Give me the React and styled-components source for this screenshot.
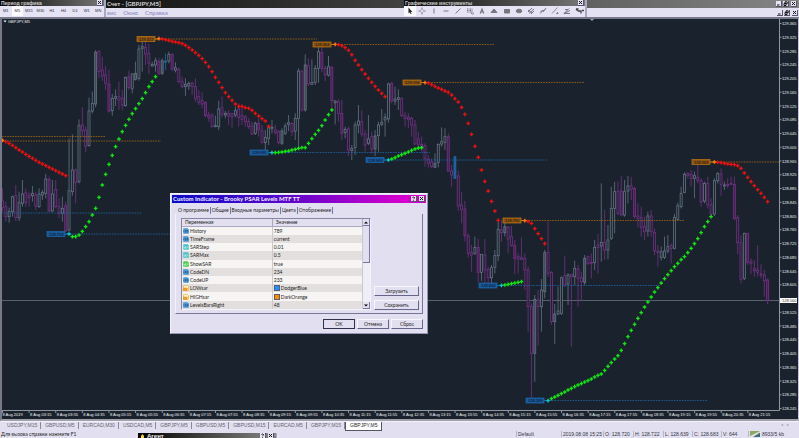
import React from "react";
import styled, { createGlobalStyle, css } from "styled-components";

const GlobalStyle = createGlobalStyle`
  * {
    box-sizing: border-box;
  }

  body {
    margin: 0;
    background: #e2e0f0;
    font-family: "Liberation Sans", Arial, sans-serif;
    font-size: 5px;
    line-height: 6px;
    color: #222;
  }

  button {
    margin: 0;
    padding: 0;
    font: inherit;
    color: inherit;
  }
`;

const Page = styled.div`
  position: relative;
  display: flex;
  flex-direction: column;
  min-height: 100vh;
  overflow: hidden;
  white-space: nowrap;
`;

const TitleBar = styled.header`
  display: flex;
  align-items: center;
  justify-content: space-between;
  height: 8px;
  padding: 0 2px 0 107px;
  background: linear-gradient(90deg, #050505, #2c2c2c 35%, #858585);
  color: #d8d8d8;
  font-family: Lato, sans-serif;
  font-size: 6px;
  font-weight: bold;
`;

const MenuBar = styled.nav`
  display: flex;
  align-items: center;
  gap: 7px;
  height: 9px;
  padding: 0 1px 0 107px;
  background: #e4e2f2;
`;

const MenuLink = styled.a`
  color: #8482bc;
  font-family: Lato, sans-serif;
  font-size: 6px;
  text-decoration: none;
`;

const WindowButtons = styled.div`
  display: flex;
  gap: 1px;
  margin-left: auto;
`;

const SmallButton = styled.button`
  display: flex;
  align-items: center;
  justify-content: center;
  width: 6px;
  height: 6px;
  border: 0;
  border-right: 1px solid #55536e;
  border-bottom: 1px solid #55536e;
  background: #e6e4f2;

  &:last-child {
    margin-left: ${(p) => (p.$apart ? "1px" : "0")};
  }

  svg {
    display: block;
    width: 5px;
    height: 5px;
    fill: none;
    stroke: #111;
  }
`;

const Floating = styled.section`
  position: absolute;
  top: 0;
  left: ${(p) => p.$left}px;
  width: ${(p) => p.$width}px;
  border-right: 2px solid #aaa8c0;
  background: #e6e4f4;
`;

const FloatingTitle = styled.div`
  display: flex;
  align-items: center;
  justify-content: space-between;
  height: 6px;
  padding: 0 1px;
  background: linear-gradient(90deg, #080808, #777);
  color: #cfcfcf;
  font-weight: bold;
`;

const Tools = styled.div`
  display: grid;
  grid-template-columns: repeat(${(p) => p.$count}, 1fr);
  height: 11px;
  padding-bottom: 1px;
`;

const Tool = styled.button`
  display: flex;
  align-items: center;
  justify-content: center;
  border: 0;
  background: ${(p) => (p.$active ? "#fbfaff" : "transparent")};
  color: #2c2c3a;
  font-size: 4px;

  svg {
    width: 10px;
    height: 8px;
    fill: none;
    stroke: #777784;
  }
`;

const ChartFrame = styled.main`
  border: 2px solid #77798a;
  border-right: 1px solid #c8c6da;
  border-bottom-color: #9fa0a8;
  background: #1a232d;

  svg {
    display: block;
    width: 100%;
    height: auto;
  }

  text {
    font-size: 4px;
    fill: #f0f2f4;
  }
`;

const ChartTabs = styled.nav`
  display: flex;
  height: 10px;
  padding: 0 10px 0 3px;
  border-top: 1px solid #f3f2fa;
`;

const ChartTab = styled.a`
  position: relative;
  height: 7px;
  padding: 0 3px 0 4px;
  color: #64646e;
  font-size: 5px;
  line-height: 7px;
  text-decoration: none;
  border-right: 1px solid #8a8996;

  ${(p) =>
    p.$active &&
    css`
      height: 9px;
      border: 1px solid #55555f;
      border-top: 0;
      background: #fff;
      color: #222;
    `}
`;

const TabArrows = styled.div`
  display: flex;
  gap: 4px;
  margin-left: auto;
  color: #9694ac;
  font-size: 4px;
`;

const StatusBar = styled.footer`
  display: flex;
  height: 7px;
  padding-left: 1px;
  padding-right: 1px;
`;

const StatusHelp = styled.div`
  flex: 1;
  font-family: Lato, sans-serif;
`;

const StatusCell = styled.div`
  display: flex;
  align-items: center;
  gap: 2px;
  width: ${(p) => p.$width}px;
  height: 6px;
  padding-left: 1px;
  border-left: 1px solid #b4b2cc;
  color: #333340;
`;

const Agent = styled.section`
  position: absolute;
  left: 138px;
  bottom: 0;
  display: flex;
  align-items: center;
  gap: 2px;
  width: 139px;
  height: 5px;
  padding: 1px 2px 0;
  overflow: hidden;
  border-right: 1px solid #aaa8c0;
  background: linear-gradient(90deg, #000, #888);
  color: #eee;
  font-size: 6px;
  font-weight: bold;
`;

const Dialog = styled.section`
  position: absolute;
  left: 170px;
  top: 193px;
  width: 258px;
  height: 141px;
  padding: 1px;
  border: 1px solid #f4f3fb;
  border-right-color: #9896b4;
  border-bottom-color: #9896b4;
  background: #e2e0f0;
  font-family: Lato, sans-serif;
`;

const DialogTitle = styled.div`
  display: flex;
  align-items: center;
  height: 8px;
  padding: 0 1px;
  background: linear-gradient(90deg, #0a0ac8, #5a06cc 45%, #d400cc 90%);
  color: #f2f0ff;
  font-size: 6px;
  font-weight: bold;
`;

const DialogTabs = styled.div`
  display: flex;
  margin: 4px 0 0 5px;
`;

const DialogTab = styled.button`
  height: 7px;
  padding: 0 1px;
  border: 0;
  border-right: 1px solid #77759a;
  background: transparent;
  line-height: ${(p) => (p.$active ? 5 : 7)}px;
`;

const DialogPanel = styled.div`
  display: flex;
  justify-content: space-between;
  gap: 3px;
  height: 100px;
  margin: 0 3px;
  padding: 4px 3px 3px 5px;
  border-left: 1px solid #f4f3fb;
  border-right: 1px solid #77759a;
  border-bottom: 1px solid #77759a;
`;

const TableBox = styled.div`
  display: flex;
  flex: 1;
  border: 1px solid #8785a4;
  border-right-color: #f4f3fb;
  border-bottom-color: #f4f3fb;
`;

const ParamTable = styled.table`
  flex: 1;
  width: 100%;
  height: 90px;
  border-collapse: collapse;
  table-layout: fixed;
  text-align: left;

  th {
    width: 50%;
    height: 7px;
    padding: 0 3px;
    border-right: 1px solid #a9a7c2;
    border-bottom: 1px solid #a9a7c2;
    background: #e2e0f0;
    font-weight: normal;
    line-height: 6px;
  }

  td {
    padding: 0 1px;
    border-right: 1px solid #c9c7cf;
    line-height: 6px;
  }

  tbody tr:nth-child(odd) {
    background: #f7f5f4;
  }

  tbody tr:nth-child(even) {
    background: #e2dfde;
  }
`;

const CellContent = styled.div`
  display: flex;
  align-items: center;
  gap: 1px;
`;

const Swatch = styled.span`
  width: 6px;
  height: 6px;
  border: 1px solid #55606c;
  background: ${(p) => p.$color};
`;

const ScrollBar = styled.div`
  display: flex;
  flex-direction: column;
  flex-shrink: 0;
  width: 7px;
  background: #efeef7;
`;

const ScrollButton = styled.button`
  display: flex;
  align-items: center;
  justify-content: center;
  height: 7px;
  border: 0;
  border-right: 1px solid #77759a;
  border-bottom: 1px solid #77759a;
  background: #e2e0f0;

  svg {
    width: 4px;
    height: 3px;
  }
`;

const ScrollThumb = styled.div`
  height: 37px;
  margin-bottom: auto;
  border-right: 1px solid #77759a;
  border-bottom: 1px solid #77759a;
  background: #e2e0f0;
`;

const SideButtons = styled.div`
  display: flex;
  flex-direction: column;
  justify-content: flex-end;
  gap: 4px;
  width: 45px;
`;

const DialogButtons = styled.div`
  display: flex;
  justify-content: flex-end;
  gap: 2px;
  margin: 5px 3px 0;
`;

const PushButton = styled.button`
  min-width: 32px;
  height: 10px;
  border: 1px solid #f8f7fd;
  border-right-color: #66648a;
  border-bottom-color: #66648a;
  background: #e2e0f0;

  ${(p) =>
    p.$primary &&
    css`
      border-color: #33324e;
    `}
`;

/* Chart data: values are vertical positions in thirds of a chart unit,
   counted from the base of the group: high low top bottom kind. */
const CANDLES = [
  {
    base: 90,
    rows: `475 545 513 533 d,515 575 530 560 d,533 578 545 560 u,497 560 500 545 u,465 573 497 563 d,
485 573 518 563 u,450 530 492 520 u,475 530 488 518 d,485 530 495 503 d,468 515 490 497 u,
485 540 495 528 d,475 533 492 530 u,480 510 487 495 u,432 505 447 490 u,440 545 448 543 D,
450 545 492 543 u,450 535 478 530 d,505 565 530 550 d,500 575 535 550 u,515 605 527 603 D,
325 605 482 600 u,313 497 420 485 u,415 520 420 458 d,268 460 287 455 u,232 320 285 302 d,
290 367 300 348 d,203 350 243 347 u,185 250 220 243 u,60 232 67 222 U,60 145 65 125 d,
80 153 120 138 d,108 180 135 160 d,120 248 162 243 D,192 257 205 242 u,178 228 200 205 u,
155 240 200 210 d,180 240 205 225 d,140 230 142 227 u,122 180 140 173 D,130 190 132 175 u,
95 152 130 148 U,45 152 57 145 u,35 125 50 55 u,32 105 52 72 d,42 132 70 100 d,
95 110 103 108 u,83 125 92 105 u,85 135 95 130 D,85 135 92 130 U,70 120 93 97 b,
65 100 73 93 u,70 123 73 117 D,97 127 113 120 u,113 160 118 155 d,140 175 155 170 d,
145 198 163 170 u,155 180 160 168 u,155 195 160 170 d,145 215 170 205 d,180 225 200 217 d,
187 235 212 222 d,215 262 217 257 D,245 275 255 262 d,250 293 255 290 d,257 292 287 290 u,
212 300 237 290 u,200 262 233 253 d,243 265 250 255 u,240 285 250 258 d,250 293 250 260 d,
230 262 242 255 u,220 290 237 262 d,232 285 257 268 d,255 290 260 275 d,265 297 275 290 d,
275 315 288 312 d,275 315 280 310 u,265 320 280 300 D,285 340 303 337 d,300 365 322 338 u,
285 345 293 325 u,270 310 292 295 u,285 315 300 308 d,300 343 305 338 d,295 345 303 340 U,
280 315 288 310 u,255 303 278 283 u,278 318 280 305 d,250 330 265 303 u,115 355 123 265 u,
120 245 125 240 d,73 245 105 240 U,85 168 107 162 d,88 165 157 163 u,105 165 115 157 u,
45 158 65 115 u,47 127 67 115 D,107 153 115 135 d,78 140 110 135 u,108 245 112 212 D,
210 283 213 218 u,208 275 215 250 d,210 330 250 310 D,290 325 298 308 u,290 378 297 360 d,
345 390 355 362 u,275 375 285 352 u,225 310 273 285 u,240 320 275 312 d,300 365 312 345 d,
255 345 327 340 u,305 370 320 357 d,300 378 318 357 U,275 365 285 317 u,237 288 277 283 u,
250 320 262 270 u,158 278 162 267 u,155 220 160 213 D,170 225 207 213 u,178 240 203 208 u,
203 260 205 257 d,245 290 257 265 d,250 295 262 268 d,260 320 265 285 d,270 345 285 342 d,
305 360 327 343 d,320 365 343 350 d,340 410 347 385 d,375 412 388 400 d,385 415 395 410 d,
370 412 400 412 U,340 412 343 397 u,292 350 335 342 u,295 360 320 337 u,310 425 320 423 D,
405 470 423 435 d,380 445 380 445 b`,
  },
  {
    base: 390,
    rows: `122 243 138 228 d,185 280 225 238 d,213 335 237 317 D,310 383 318 370 d,345 425 368 375 d,320 375 352 370 u`,
  },
  {
    base: 630,
    rows: `87 217 112 187 D,132 213 133 187 u,87 225 135 180 d,170 222 178 203 d,165 225 173 203 u,
120 190 137 172 u,35 153 58 137 u,30 95 60 68 d,35 80 50 68 U,48 130 52 87 d,
48 110 80 107 d,90 192 107 145 D,130 190 140 147 d,82 150 143 148 d,130 240 145 180 d,
170 365 180 290 d,280 565 290 430 d,255 515 268 430 U,240 407 270 290 d,207 365 240 290 u,
120 265 128 245 U,35 200 128 190 d,183 345 187 335 d,282 402 312 335 U,230 315 303 312 u,
200 315 203 310 u,137 230 197 225 d,190 285 195 222 u,193 410 193 200 d,152 225 175 200 u,
165 290 177 205 d,185 272 203 215 d,135 225 145 217 U,137 165 140 160 d,130 205 157 160 d,
90 180 112 158 u,72 190 105 113 d,-80 155 97 108 u,0 150 98 120 d,45 148 90 120 u,
-70 90 -5 85 u,-85 70 -55 -5 u,-85 15 -55 10 d`,
  },
  {
    base: 420,
    rows: `108 228 153 225 D,120 230 155 225 u,108 190 138 153 u,112 180 138 148 d,140 235 145 230 D,
190 262 228 235 d,200 290 233 262 d,230 300 260 275 d,215 290 228 273 u,210 290 228 275 d,
265 345 277 333 d,315 380 333 337 d,320 362 335 352 u,290 357 333 352 u,285 340 320 333 u,
310 370 317 325 d,222 328 232 325 u,188 242 197 238 u,140 205 160 200 u,97 160 103 157 u,
97 115 100 107 d,90 140 103 115 d,95 175 107 115 u,75 130 112 122 d,115 200 122 185 d,
125 190 130 183 u,110 205 130 195 d,175 225 195 222 d,115 228 122 222 u,97 130 100 122 u,
85 167 102 133 d,125 150 135 138 u,115 145 133 137 d,110 133 130 133 d,110 240 133 235 D,
225 342 233 308 d,285 430 308 418 d,278 420 280 415 u,280 375 280 367 D,355 402 365 370 d,
360 410 385 392 d,315 410 390 397 d,373 415 402 405 d,390 470 405 422 d,415 492 420 482 D`,
  },
];

const candles = CANDLES.flatMap(({ base, rows }) =>
  rows.split(",").map((row) => {
    const [high, low, top, bottom, kind] = row.trim().split(" ");
    const y = (v) => (Number(v) + base) / 3;
    return { high: y(high), low: y(low), top: y(top), bottom: y(bottom), kind };
  })
);

const RED = "#ee1010";
const GREEN = "#10e810";

// color, first bar, base, positions
const SAR = [
  [RED, 0, 90, "331 335 340 346 353 360 366 373 379 385 391 397 402 407 412 417 422 427 432 437"],
  [GREEN, 20, 90, "612 620 620 615 604 590 575 555 535 502 465 433 403 376 350 327 305 286 268 251 236 221 206 188 170 155 140"],
  [RED, 47, 90, "26 27 29 31 34 36 38 41 46 53 60 68 76 86 97 110 125 142 157 173 188 200 211 222 229 229 233 235 241 250 258 266 273 289"],
  [GREEN, 81, 90, "368 368 367 366 364 363 360 358 355 353 353 340 326 313 301 287 270 254 240"],
  [RED, 100, 90, "43 44 47 53 61 74 91 105 119 132 145 157 169 180 190 200"],
  [GREEN, 116, 90, "390 387 383 378 374 370 366 361 357 354 353"],
  [RED, 127, 90, "158 159 164 169 174 178 183 187 195 206 216 232 253 280 313 349 382 420 454 483 514 543 571"],
  [GREEN, 150, 630, "226 225 223 221 219 217 215"],
  [RED, 157, 630, "32 34 40 56 71 86 101"],
  [GREEN, 164, 630, "572 566 561 556 551 546 540 535 530 525 521 516 512 507 501 496 492 481 469 458 447 437 421 401 380 361 343 325 308 291 276 261 246 233 219 206 194 182 170 160 149 140 128 115 101 86 68 50 35 20"],
  [RED, 214, 420, "66 67 68 70 72 73 74 77 85 99 112 125 137 149 160 172 185"],
];

const HIGH = { line: "#a8660f", fill: "#8a5412", edge: "#c4780f", ink: "#100c08", dot: "#ff7a10" };
const LOW = { line: "#1f64a8", fill: "#1a5796", edge: "#1f6ab4", ink: "#040c18", dot: "#10c8c8" };

const LEVELS = [
  { tone: HIGH, from: 2, to: 105, y: 136.5 },
  { tone: HIGH, from: 2, to: 161, y: 141 },
  { tone: LOW, from: 2, to: 141, y: 213 },
  { tone: LOW, tag: "128.753", x: 47, to: 228, y: 234 },
  { tone: HIGH, tag: "129.322", x: 137, to: 317, y: 39 },
  { tone: LOW, tag: "128.995", x: 250, to: 430, y: 152.5 },
  { tone: HIGH, tag: "129.304", x: 313, to: 494, y: 44.5 },
  { tone: LOW, tag: "128.969", x: 366, to: 547, y: 160 },
  { tone: HIGH, tag: "129.194", x: 403, to: 584, y: 82.5 },
  { tone: LOW, tag: "128.604", x: 479, to: 660, y: 285.5 },
  { tone: HIGH, tag: "128.792", x: 503, to: 684, y: 220.5 },
  { tone: LOW, tag: "128.269", x: 526, to: 707, y: 400.5 },
  { tone: HIGH, tag: "128.963", x: 692, to: 779, y: 162 },
];

const TIMES = [
  "2019", "03:15", "03:55", "04:35", "05:15", "05:55", "06:35", "07:15", "07:55", "08:35",
  "09:15", "09:55", "10:35", "11:15", "11:55", "12:35", "13:15", "13:55", "14:35", "15:15",
  "15:55", "16:35", "17:15", "17:55", "18:35", "19:15", "19:55", "20:35", "21:15",
];

// the bid label covers this step of the price scale
const COVERED_STEP = 20;

const COLORS = {
  u: ["#647484", "#1a232d"],
  U: ["#647484", "#3b4854"],
  d: ["#773088", "#1a232d"],
  D: ["#773088", "#42214e"],
  b: ["#1e62a0", "#1e62a0"],
};

const barX = (i) => (7.5 + 9.98 * i) / 3;

const Candle = ({ x, high, low, top, bottom, kind }) => {
  const [stroke, fill] = COLORS[kind];
  return (
    <g stroke={stroke} strokeWidth="0.8">
      <path d={`M${x} ${high}V${low}`} />
      <rect x={x - 1} y={top} width="2" height={Math.max(bottom - top, 0.5)} fill={fill} />
    </g>
  );
};

const Level = ({ tone, tag, x, from, to, y }) => (
  <g>
    <path
      d={`M${tag ? x + 18 : from} ${y}H${to}`}
      stroke={tone.line}
      strokeWidth="0.8"
      strokeDasharray="1.6 1"
    />
    {tag && (
      <>
        <rect x={x} y={y - 2.5} width="18" height="5" fill={tone.fill} stroke={tone.edge} strokeWidth="0.7" />
        <text x={x + 2} y={y + 1.5} style={{ fill: tone.ink }}>
          {tag}
        </text>
        <path d={`M${x + 18} ${y}h4`} stroke={tone.edge} />
      </>
    )}
  </g>
);

const Chart = () => (
  <svg viewBox="2 19 796 400" role="img" aria-label="GBPJPY,M5">
    <path d="M2 300.5H779" stroke="#66717c" strokeWidth="0.8" />
    {candles.map((c, i) => (
      <Candle key={i} x={barX(i)} {...c} />
    ))}
    {LEVELS.map((level) => (
      <Level key={level.y} {...level} />
    ))}
    {SAR.map(([color, start, base, list]) =>
      list.split(" ").map((v, i) => {
        const x = barX(start + i);
        const y = (Number(v) + base) / 3;
        const edge = color === RED ? HIGH.dot : LOW.dot;
        return (
          <path
            key={`${start}-${i}`}
            d={`M${x - 1.8} ${y}h3.6M${x} ${y - 1.8}v3.6`}
            stroke={i === 0 ? edge : color}
            strokeWidth="1.4"
          />
        );
      })
    )}
    <path d="M2 410.5H779.5V19" fill="none" stroke="#8f98a1" />
    <path d="M590 19h4l-2 2z" fill="#9aa2ac" />
    <path d="M3.5 20.5h3l-1.5 2z" fill="#fff" />
    <text x="8" y="23">GBPJPY,M5</text>
    {Array.from({ length: 29 }, (_, i) => {
      const y = 23.5 + i * 13.75;
      return (
        <g key={i}>
          <path d={`M780 ${y}h1.5`} stroke="#8f98a1" />
          {i !== COVERED_STEP && (
            <text x="782" y={y + 1.5}>
              {(129.365 - i * 0.04).toFixed(3)}
            </text>
          )}
        </g>
      );
    })}
    <rect x="780" y="298" width="17" height="5" fill="#fff" />
    <text x="782" y="302" style={{ fill: "#333" }}>128.560</text>
    {TIMES.map((time, i) => {
      const x = 2.5 + i * 26.62;
      return (
        <g key={time}>
          <path d={`M${x} 410v3`} stroke="#8f98a1" />
          <text x={i ? x + 1 : x} y="416">
            8 Aug {time}
          </text>
        </g>
      );
    })}
  </svg>
);

const WINDOW_ICONS = {
  Minimize: "M1 4h2.5",
  Restore: "M1 2.5h2v2h-2zM2 2V.8h2.2v2H3",
  Close: "M1 1l3 3M4 1L1 4",
  Help: "M1.5 1.5q1-1 2 0q0 1-1 1.500M2.500 4v.6",
};

const WindowButton = ({ name, apart }) => (
  <SmallButton aria-label={name} $apart={apart}>
    <svg viewBox="0 0 5 5">
      <path d={WINDOW_ICONS[name]} />
    </svg>
  </SmallButton>
);

const DRAW_TOOLS = [
  ["Cursor", <path d="M3.500 .5v6l1.300-1.300 1 2 .8-.4-.9-1.900h1.600z" fill="#222" stroke="none" />],
  ["Crosshair", <path d="M5 .5v2.500M5 5v2.500M1.500 4H4M6 4h2.500" />],
  ["Vertical line", <path d="M5 1.500v5" />],
  ["Horizontal line", <path d="M2.500 4h5" />],
  ["Trend line", <path d="M2.500 6.500l5-5" />],
  ["Fibonacci", <path d="M2 2h6M2 3.500h6M2 5h6M6 6h3l-1.500 1.500z" strokeDasharray="1 .5" />],
  ["Text", <path d="M3.200 6.500L5 2l1.800 4.500M4 5h2" strokeWidth="1.200" />],
  ["Triangle", <path d="M2 5.500L5 2l3 3.500z" fill="#777" />],
  ["Rectangle", <path d="M2.500 2.500h5v3.500h-5z" fill="#777" />],
  ["Ellipse", <ellipse cx="5" cy="4" rx="2.800" ry="1.800" fill="#777" />],
  ["Channel", <path d="M2 5l4-4M3 6.500l5-4.500M5 7l3-3M2 3l4 3" />],
  ["Pitchfork", <path d="M2.500 6.500l2-3 1 1 2.500-3.500M2.500 4.500L7 3" />],
  ["Gann line", <path d="M2 6.500l5.500-6M6 6.500h2.500M7.500 5v2" strokeWidth=".8" />],
  ["Gann fan", <path d="M2 6.500l5-5M2 6.500l6-3M2 6.500h6M3 2.500h3" />],
  ["Arrows", <path d="M2 2l2 2M4 4h3v2.500M2 2h2.500M8 3.500h2" strokeWidth="1.300" stroke="#444" />],
];

const PARAMS = [
  ["int", "History", "789"],
  ["int", "TimeFrame", "current"],
  ["num", "SARStep", "0.01"],
  ["num", "SARMax", "0.5"],
  ["bool", "ShowSAR", "true"],
  ["int", "CodeDN", "234"],
  ["int", "CodeUP", "233"],
  ["color", "LOWsar", "DodgerBlue", "#1e90ff"],
  ["color", "HIGHsar", "DarkOrange", "#ff8c00"],
  ["int", "LevelsBarsRight", "48"],
];

const TYPE_COLORS = { int: "#4b98d8", num: "#4cc4cc", bool: "#4fce55", color: "#f2aa28" };

const TypeIcon = ({ type }) => (
  <svg width="6" height="6" viewBox="0 0 6 6">
    <path d="M.5.5h4l1 1v4h-5z" fill={type === "color" ? "#fff3c8" : TYPE_COLORS[type]} stroke={TYPE_COLORS[type]} strokeWidth=".6" />
    {type === "color" ? (
      <path d="M0 3h4v2.500H0zM4 4l1.500-1.500" fill="#f2a020" stroke="#e08818" strokeWidth=".5" />
    ) : type === "int" ? (
      <path d="M.8 2.500v1.500M2 2.500h1v1.500H2M4 2.500h1v1.500H4" fill="none" stroke="#174a80" strokeWidth=".6" />
    ) : (
      <path d="M1 3l1 1.500 1-2.500M3.500 4.500L5 2.500" fill="none" stroke="#e8ffff" strokeWidth=".6" />
    )}
  </svg>
);

const IndicatorDialog = () => (
  <Dialog role="dialog" aria-label="Custom Indicator">
    <DialogTitle>
      Custom Indicator - Brooky PSAR Levels MTF TT
      <WindowButtons>
        <WindowButton name="Help" />
        <WindowButton name="Close" apart />
      </WindowButtons>
    </DialogTitle>
    <DialogTabs>
      {["О программе", "Общие", "Входные параметры", "Цвета", "Отображение"].map((tab, i) => (
        <DialogTab key={tab} $active={i === 2}>
          {tab}
        </DialogTab>
      ))}
    </DialogTabs>
    <DialogPanel>
      <TableBox>
        <ParamTable>
          <thead>
            <tr>
              <th>Переменная</th>
              <th>Значение</th>
            </tr>
          </thead>
          <tbody>
            {PARAMS.map(([type, name, value, color]) => (
              <tr key={name}>
                <td>
                  <CellContent>
                    <TypeIcon type={type} />
                    {name}
                  </CellContent>
                </td>
                <td>
                  <CellContent>
                    {color && <Swatch $color={color} />}
                    {value}
                  </CellContent>
                </td>
              </tr>
            ))}
          </tbody>
        </ParamTable>
        <ScrollBar>
          <ScrollButton aria-label="Up">
            <svg viewBox="0 0 4 3">
              <path d="M0 2.500h4L2 .5z" />
            </svg>
          </ScrollButton>
          <ScrollThumb />
          <ScrollButton aria-label="Down">
            <svg viewBox="0 0 4 3">
              <path d="M0 .5h4L2 2.500z" />
            </svg>
          </ScrollButton>
        </ScrollBar>
      </TableBox>
      <SideButtons>
        <PushButton>Загрузить</PushButton>
        <PushButton>Сохранить</PushButton>
      </SideButtons>
    </DialogPanel>
    <DialogButtons>
      <PushButton $primary>OK</PushButton>
      <PushButton>Отмена</PushButton>
      <PushButton>Сброс</PushButton>
    </DialogButtons>
  </Dialog>
);

const PERIODS = ["M1", "M5", "M15", "M30", "H1", "H4", "D1", "W1", "MN"];

const TABS = [
  "USDJPY,M15", "GBPUSD,M5", "EURCAD,M30", "USDCAD,M5", "GBPJPY,M5",
  "GBPUSD,M5", "GBPUSD,M15", "EURCAD,M5", "GBPJPY,M15", "GBPJPY,M5",
];

const STATUS = [
  ["Default", 45],
  ["2019.08.08 15:25", 42],
  ["O: 128.720", 30],
  ["H: 128.722", 30],
  ["L: 128.639", 29],
  ["C: 128.683", 29],
  ["V: 644", 27],
];

const App = () => (
  <Page>
    <GlobalStyle />
    <TitleBar>
      Счет - [GBPJPY,M5]
      <WindowButtons>
        <WindowButton name="Minimize" />
        <WindowButton name="Restore" />
        <WindowButton name="Close" apart />
      </WindowButtons>
    </TitleBar>
    <MenuBar>
      <MenuLink href="#service">вис</MenuLink>
      <MenuLink href="#window">Окно</MenuLink>
      <MenuLink href="#help">Справка</MenuLink>
      <WindowButtons>
        <WindowButton name="Minimize" />
        <WindowButton name="Restore" />
        <WindowButton name="Close" apart />
      </WindowButtons>
    </MenuBar>

    <ChartFrame>
      <Chart />
    </ChartFrame>

    <ChartTabs>
      {TABS.map((tab, i) => (
        <ChartTab key={i} href={`#chart${i}`} $active={i === TABS.length - 1}>
          {tab}
        </ChartTab>
      ))}
      <TabArrows>
        <span>◂</span>
        <span>▸</span>
      </TabArrows>
    </ChartTabs>
    <StatusBar>
      <StatusHelp>Для вызова справки нажмите F1</StatusHelp>
      {STATUS.map(([label, width]) => (
        <StatusCell key={label} $width={width}>
          {label}
        </StatusCell>
      ))}
      <StatusCell $width={50}>
        <svg width="10" height="6" viewBox="0 0 10 6">
          <path d="M0 0h10v6H0z" fill="#3f6f86" />
          <path d="M0 0h10L0 5z" fill="#8fa860" />
          <path d="M0 5L10 0v1.500L3 6H0z" fill="#e4ead0" />
        </svg>
        8933/5 kb
      </StatusCell>
    </StatusBar>

    <Floating $left={0} $width={106}>
      <FloatingTitle>
        Период графика
        <WindowButton name="Close" />
      </FloatingTitle>
      <Tools $count={9}>
        {PERIODS.map((period) => (
          <Tool key={period} $active={period === "M5"}>
            {period}
          </Tool>
        ))}
      </Tools>
    </Floating>
    <Floating $left={404} $width={183}>
      <FloatingTitle>
        Графические инструменты
        <WindowButton name="Close" />
      </FloatingTitle>
      <Tools $count={15}>
        {DRAW_TOOLS.map(([name, icon], i) => (
          <Tool key={name} aria-label={name} $active={i === 0}>
            <svg viewBox="0 0 10 8">{icon}</svg>
          </Tool>
        ))}
      </Tools>
    </Floating>
    <IndicatorDialog />
    <Agent>
      <svg width="5" height="5" viewBox="0 0 5 5">
        <path d="M2.500 0L4 2v2l1 1H0l1-1V2z" fill="#ffd820" />
      </svg>
      Агент
      <WindowButtons>
        <WindowButton name="Help" />
        <WindowButton name="Close" apart />
      </WindowButtons>
    </Agent>
  </Page>
);

export default App;
